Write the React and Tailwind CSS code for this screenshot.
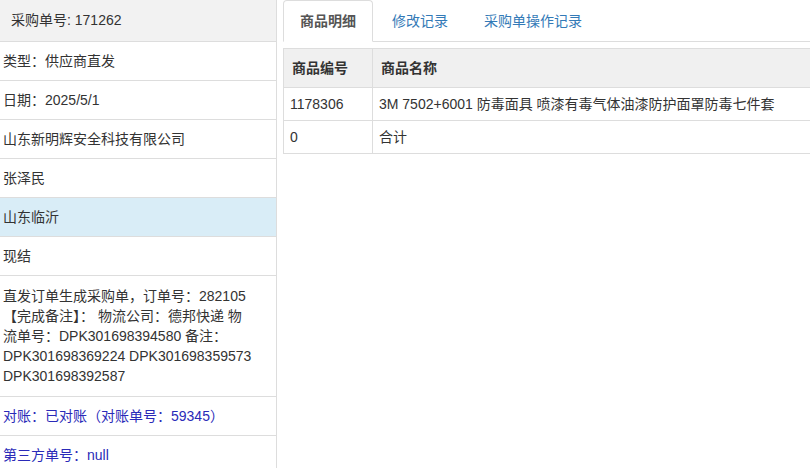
import React from "react";

const font = { fontFamily: '"Liberation Sans", "Noto Sans CJK SC", Arial, sans-serif' };

function Row({ children, className = "" }) {
  return (
    <div className={`shrink-0 border-b border-[#dddddd] px-[3px] py-[9px] leading-[20px] ${className}`}>
      {children}
    </div>
  );
}

export default function App() {
  return (
    <div
      className="flex w-[810px] h-[468px] overflow-hidden bg-white text-[14px] text-[#333333]"
      style={font}
    >
      <div className="w-[277px] shrink-0 border-r border-[#dddddd] flex flex-col">
        <div className="shrink-0 h-[42px] bg-[#f2f2f2] border-b border-[#dddddd] flex items-center pl-[11px]">
          采购单号: 171262
        </div>
        <Row>类型：供应商直发</Row>
        <Row>日期：2025/5/1</Row>
        <Row>山东新明辉安全科技有限公司</Row>
        <Row>张泽民</Row>
        <Row className="bg-[#d9edf7]">山东临沂</Row>
        <Row>现结</Row>
        <div className="shrink-0 border-b border-[#dddddd] px-[3px] py-[10px] leading-[20px]">
          直发订单生成采购单，订单号：282105
          <br />
          【完成备注】： 物流公司：德邦快递 物
          <br />
          流单号：DPK301698394580 备注：
          <br />
          DPK301698369224 DPK301698359573
          <br />
          DPK301698392587
        </div>
        <Row className="text-[#2a2ab8]">对账：已对账（对账单号：59345）</Row>
        <Row className="text-[#2a2ab8]">第三方单号：null</Row>
      </div>

      <div className="flex-1 pl-[6px] min-w-0">
        <ul className="flex border-b border-[#dddddd] leading-[20px]">
          <li className="mr-[2px] -mb-px">
            <div className="px-[16px] py-[10px] border border-[#dddddd] border-b-white rounded-t-[4px] bg-white font-bold text-[#555555]">
              商品明细
            </div>
          </li>
          <li className="mr-[2px] -mb-px">
            <div className="px-[16px] py-[10px] border border-transparent text-[#337ab7]">
              修改记录
            </div>
          </li>
          <li className="mr-[2px] -mb-px">
            <div className="px-[16px] py-[10px] border border-transparent text-[#337ab7]">
              采购单操作记录
            </div>
          </li>
        </ul>

        <table className="mt-[6px] w-[540px] border-collapse leading-[20px]">
          <thead>
            <tr className="bg-[#f0f0f0]">
              <th className="w-[89px] text-left font-bold px-[8px] py-[9px] border border-[#dddddd]">
                商品编号
              </th>
              <th className="text-left font-bold px-[8px] py-[9px] border-t border-b border-l border-[#dddddd]">
                商品名称
              </th>
            </tr>
          </thead>
          <tbody>
            <tr>
              <td className="px-[6px] py-[6px] border border-[#dddddd]">1178306</td>
              <td className="px-[6px] py-[6px] border-t border-b border-l border-[#dddddd] whitespace-nowrap">
                3M 7502+6001 防毒面具 喷漆有毒气体油漆防护面罩防毒七件套
              </td>
            </tr>
            <tr>
              <td className="px-[6px] py-[6px] border border-[#dddddd]">0</td>
              <td className="px-[6px] py-[6px] border-t border-b border-l border-[#dddddd]">合计</td>
            </tr>
          </tbody>
        </table>
      </div>
    </div>
  );
}
